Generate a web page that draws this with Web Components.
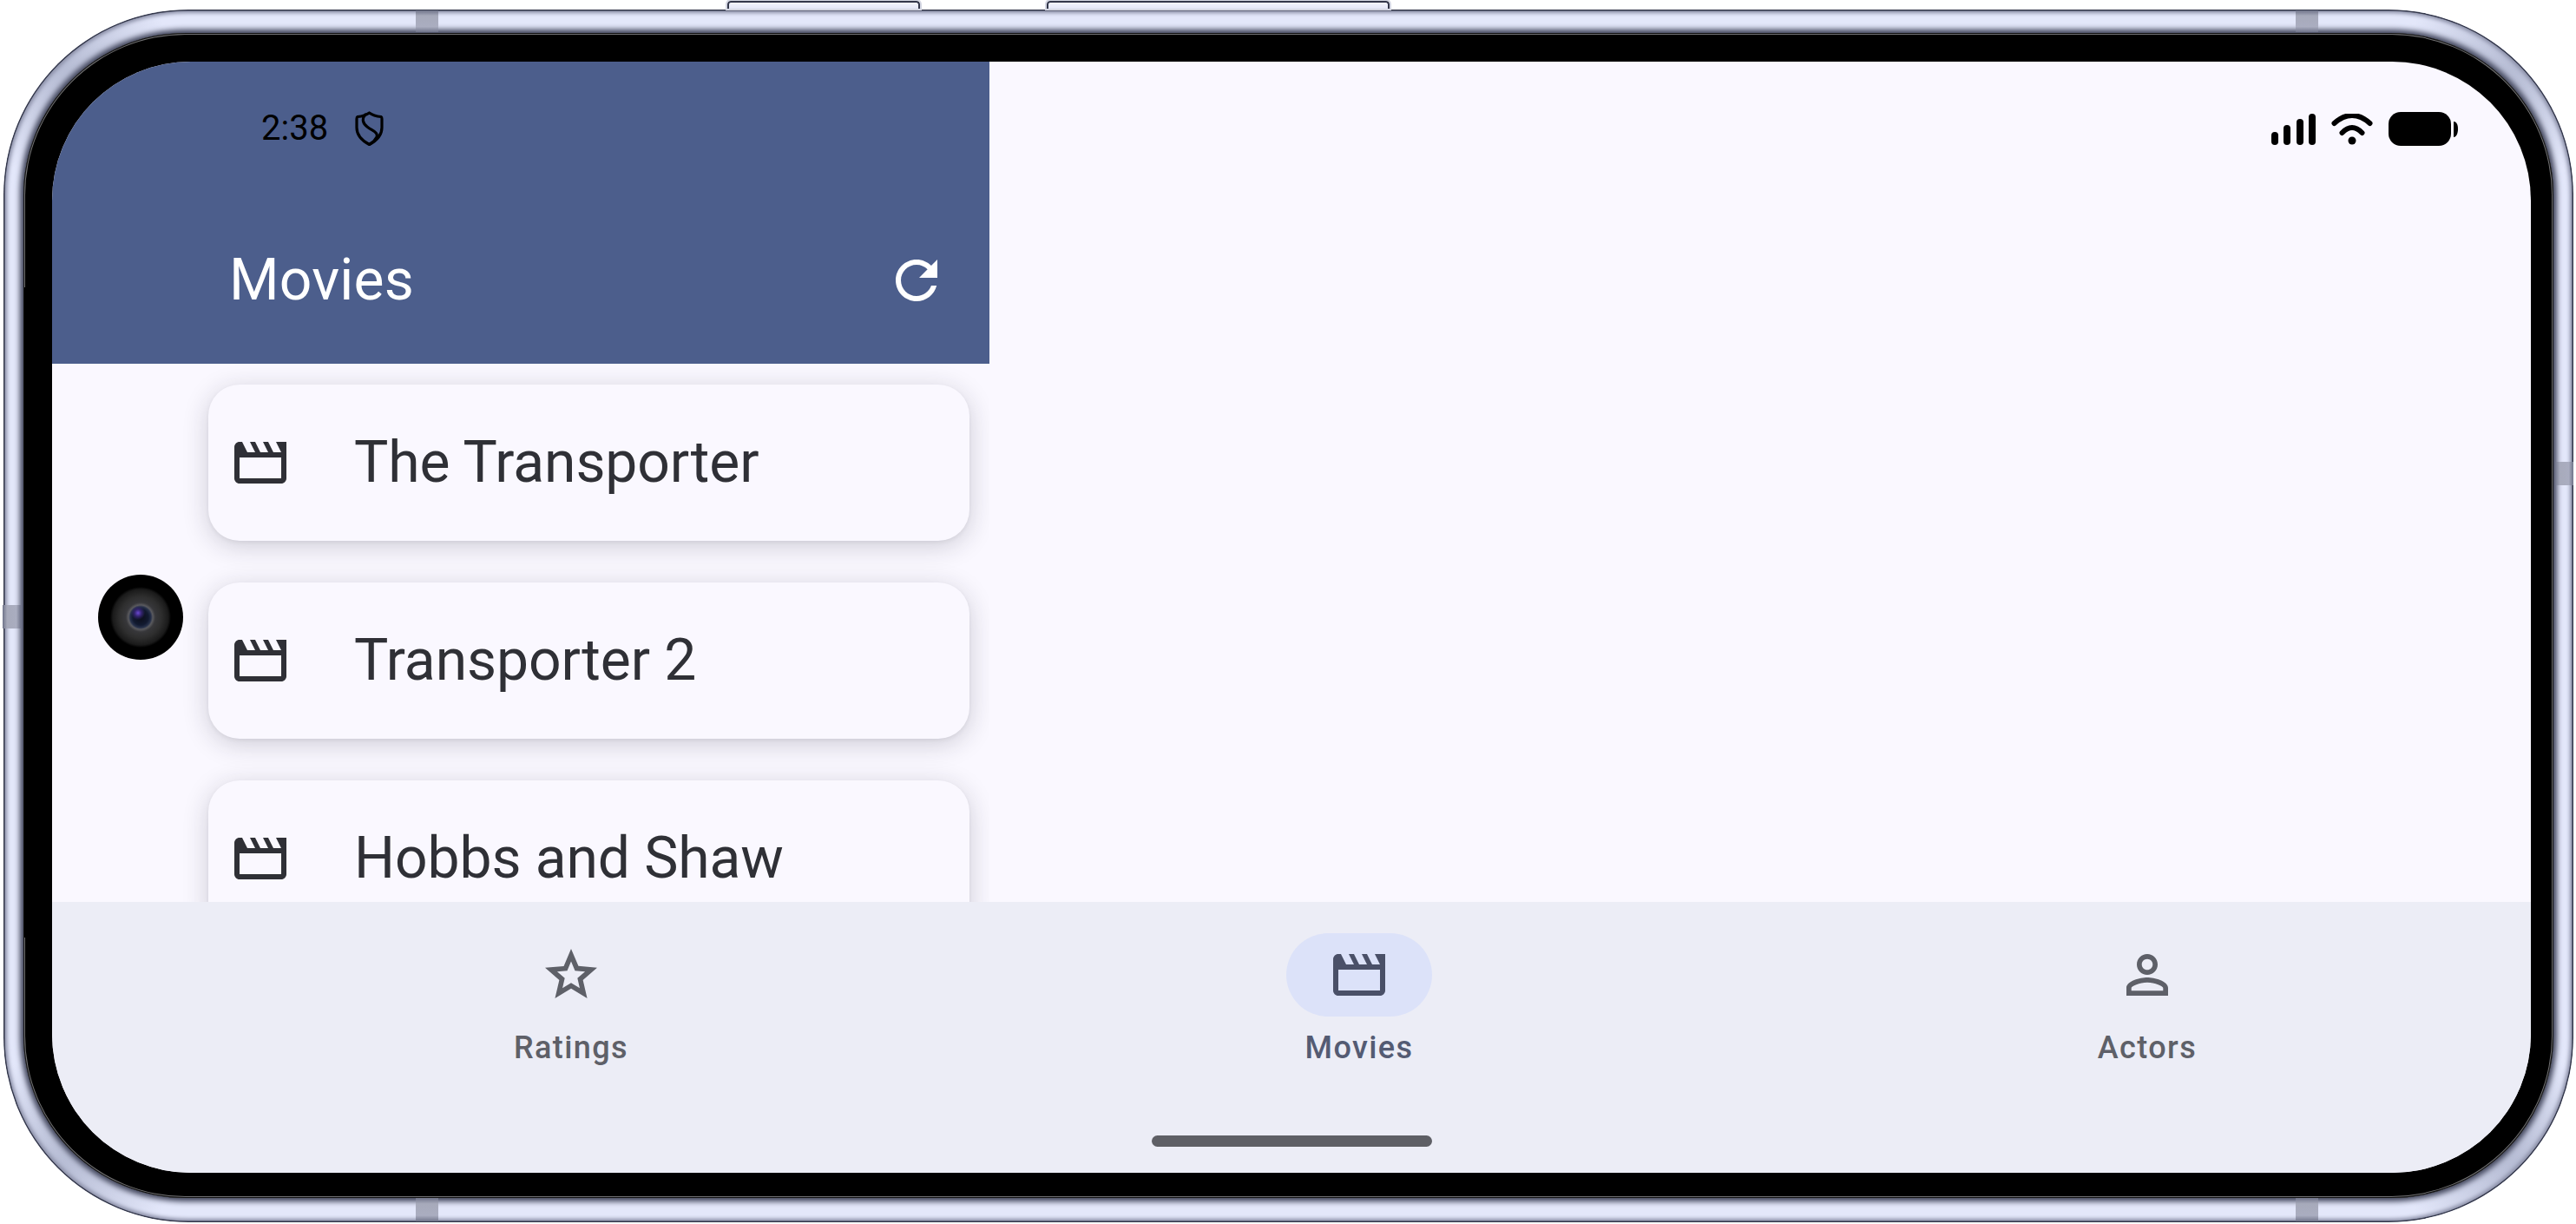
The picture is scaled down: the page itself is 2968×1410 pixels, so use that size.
<!DOCTYPE html>
<html><head><meta charset="utf-8"><title>Movies</title>
<style>
html,body{margin:0;padding:0;background:#fff;width:2968px;height:1410px;overflow:hidden;font-family:Roboto,"Liberation Sans",sans-serif}
</style></head><body>
<phone-frame>
  <movies-app></movies-app>
</phone-frame>
<script>
const MOVIE='M4 10H20v8H4V10M22 4h-4l2 4h-3l-2-4h-2l2 4h-3l-2-4H8l2 4H7L5 4H4c-1.1 0-1.99.9-1.99 2L2 18c0 1.1.9 2 2 2h16c1.1 0 2-.9 2-2V4z';
const ICONS={
 movie:MOVIE,
 star:'M22 9.24l-7.19-.62L12 2 9.19 8.63 2 9.24l5.46 4.73L5.82 21 12 17.27 18.18 21l-1.63-7.03L22 9.24zM12 15.05L8.69 17.05L9.57 13.28L6.65 10.74L10.5 10.39L12 6.86L13.5 10.42L17.36 10.75L14.44 13.29L15.32 17.06L12 15.05z',
 person:'M12 5.9c1.16 0 2.1.94 2.1 2.1s-.94 2.1-2.1 2.1S9.9 9.16 9.9 8s.94-2.1 2.1-2.1m0 9c2.97 0 6.1 1.46 6.1 2.1v1.1H5.9V17c0-.64 3.13-2.1 6.1-2.1M12 4C9.79 4 8 5.79 8 8s1.79 4 4 4 4-1.79 4-4-1.79-4-4-4zm0 9c-2.67 0-8 1.34-8 4v3h16v-3c0-2.66-5.33-4-8-4z',
 refresh:'M17.65 6.35C16.2 4.9 14.21 4 12 4c-4.42 0-7.99 3.58-7.99 8s3.57 8 7.99 8c3.73 0 6.84-2.55 7.73-6h-2.08c-.82 2.33-3.04 4-5.65 4-3.31 0-6-2.69-6-6s2.69-6 6-6c1.66 0 3.14.69 4.22 1.78L13 11h7V4l-2.35 2.35z'
};
class Base extends HTMLElement{
  render(html){ if(!this.shadowRoot) this.attachShadow({mode:'open'}); this.shadowRoot.innerHTML=html; }
}
customElements.define('md-icon',class extends Base{
  connectedCallback(){
    this.render(`<style>:host{display:block;width:72px;height:72px;flex:none;color:inherit}svg{display:block;width:72px;height:72px;fill:currentColor}</style>
    <svg viewBox="0 0 24 24"><path d="${ICONS[this.getAttribute('name')]}"/></svg>`);
  }
});
customElements.define('phone-frame',class extends Base{
  connectedCallback(){
    this.render(`<style>
    :host{display:block;position:relative;width:2968px;height:1410px;box-sizing:border-box;padding:11px 3px 2px 4px}
    .metal{box-sizing:border-box;height:100%;border-radius:213px;padding:27px 23px 28px 23px;
      background:
       radial-gradient(circle 130px at 62px 62px,#b4bad2,transparent) no-repeat,
       radial-gradient(circle 130px at calc(100% - 62px) 62px,#b4bad2,transparent) no-repeat,
       radial-gradient(circle 130px at 62px calc(100% - 62px),#b4bad2,transparent) no-repeat,
       radial-gradient(circle 130px at calc(100% - 62px) calc(100% - 62px),#b4bad2,transparent) no-repeat,
       #e3e7fa;
      box-shadow:inset 0 0 0 1.5px #33374a,inset 0 0 4px 4px #8a8ea6}
    .bezel{box-sizing:border-box;height:100%;border-radius:187px;background:#000;padding:33px 26px 29px 33px;
      box-shadow:0 0 6px 4px #3e4258,inset 0 0 0 1px #111,inset 0 0 0 2px #707072}
    .screen{position:relative;height:100%;border-radius:160px;overflow:hidden;background:#faf8ff}
    .band{position:absolute;background:linear-gradient(#70748a,#a7aabb 25%,#aaadc0 75%,#70748a)}
    .t{width:26px;height:25px;top:12px}.b{width:26px;height:27px;bottom:3px}
    .l{left:479px}.r{left:2645px}
    .side{position:absolute;width:21px;height:27px;background:linear-gradient(90deg,#70748a,#a7aabb 25%,#aaadc0 75%,#70748a)}
    .btn{position:absolute;top:1px;height:9px;box-sizing:border-box;background:linear-gradient(#f3f4fd,#e3e6f6);border:2px solid #33374a;border-bottom:0;border-radius:4px 4px 0 0;outline:2px solid #d4d6e2}
    .notch{position:absolute;left:28px;top:331px;width:3px;height:749px;background:#000}
    .cam{position:absolute;left:113px;top:662px;width:98px;height:98px;border-radius:50%;
      background:
       radial-gradient(circle at 47% 45%,#6a48d0 0,#33246e 4px,transparent 8px),
       radial-gradient(circle at 50% 50%,#0b0d18 0,#121a30 9px,#26304a 12px,#5a5a5e 14px,#37373a 17px,#2e2e2e 24px,#1a1a1a 32px,#000 35px)}
    </style>
    <div class="metal"><div class="bezel"><div class="screen"><slot></slot></div></div></div>
    <i class="btn" style="left:838px;width:222px"></i><i class="btn" style="left:1206px;width:395px"></i>
    <i class="band t l"></i><i class="band t r"></i><i class="band b l"></i><i class="band b r"></i>
    <i class="side" style="left:3px;top:697px"></i><i class="side" style="left:2944px;top:532px"></i>
    <i class="notch"></i>
    <i class="cam"></i>`);
  }
});
customElements.define('movies-app',class extends Base{
  connectedCallback(){
    this.render(`<style>
    :host{display:flex;flex-direction:column;height:100%;background:#faf8ff}
    .main{flex:1;min-height:0;display:flex;overflow:hidden}
    .pane{width:1080px;flex:none;display:flex;flex-direction:column;min-height:0}
    .rest{flex:1;display:flex;justify-content:flex-end;align-items:flex-start;box-sizing:border-box}
    .list{flex:1;min-height:0;overflow:hidden;display:flex;flex-direction:column;gap:48px;padding:24px 23px 0 180px}
    </style>
    <div class="main">
      <div class="pane">
        <app-header title-text="Movies" time="2:38"></app-header>
        <div class="list">
          <movie-card>The Transporter</movie-card>
          <movie-card>Transporter 2</movie-card>
          <movie-card>Hobbs and Shaw</movie-card>
        </div>
      </div>
      <div class="rest"><status-icons></status-icons></div>
    </div>
    <bottom-nav></bottom-nav>`);
  }
});
customElements.define('app-header',class extends Base{
  connectedCallback(){
    this.render(`<style>
    :host{display:block;height:348px;flex:none;box-sizing:border-box;background:#4c5e8c;padding-top:53px}
    .status{display:flex;align-items:center;gap:31px;height:48px;padding-left:241px;color:#000;font:400 40px/48px Roboto,sans-serif}
    svg{display:block;width:33px;height:40px;fill:none;stroke:#000;stroke-width:3.2;stroke-linejoin:round;stroke-linecap:round}
    .bar{display:flex;align-items:center;justify-content:space-between;height:72px;margin-top:115px;padding:0 48px 0 204px;color:#fff}
    h1{margin:0;font:400 66px/72px Roboto,sans-serif;letter-spacing:.2px;color:#fff}
    </style>
    <div class="status"><span>${this.getAttribute('time')}</span>
      <svg viewBox="0 0 33 40"><path d="M16.5 2C20 4.5 25 6 30 6.5C31 7 31 8 31 9V19C31 28 25 34 16.5 38.5C8 34 2 28 2 19V9C2 8 2 7 3 6.5C8 6 13 4.5 16.5 2Z"/><path d="M12 4C7.5 9 9 14 14 18C20 23 27 24 25 30C23 34 20 36.500 17 38"/></svg>
    </div>
    <div class="bar"><h1>${this.getAttribute('title-text')}</h1><md-icon name="refresh"></md-icon></div>`);
  }
});
customElements.define('movie-card',class extends Base{
  connectedCallback(){
    this.render(`<style>
    :host{display:flex;align-items:center;flex:none;height:180px;box-sizing:border-box;padding-left:24px;gap:72px;border-radius:36px;background:#faf8ff;color:#2f3036;
      font:400 66px/88px Roboto,sans-serif;letter-spacing:-.1px;box-shadow:0 6px 30px rgba(30,30,50,.2),0 2px 4px rgba(30,30,50,.06)}
    </style><md-icon name="movie"></md-icon><span><slot></slot></span>`);
  }
});
customElements.define('status-icons',class extends Base{
  connectedCallback(){
    this.render(`<style>
    :host{display:flex;align-items:flex-start;gap:18px;padding:58px 84px 0 0}
    svg{display:block;fill:#000}
    .s{margin-top:2px}
    </style>
    <svg class="s" width="51" height="36" viewBox="0 0 51 36"><rect x="0" y="21" width="8" height="15" rx="4"/><rect x="14" y="13" width="8" height="23" rx="4"/><rect x="29" y="6" width="8" height="30" rx="4"/><rect x="43" y="0" width="8" height="36" rx="4"/></svg>
    <svg class="s" width="48" height="36" viewBox="0 0 48 36"><circle cx="24" cy="31" r="4.500"/><path d="M3.500 11Q24 -7 44.500 11M12.500 22Q24 10 35.500 22" fill="none" stroke="#000" stroke-width="6" stroke-linecap="round"/></svg>
    <svg width="80" height="39" viewBox="0 0 80 39"><rect x="0" y="0" width="72" height="39" rx="14"/><path d="M75 11C78 11 80 14 80 19.500C80 25 78 29 75 29Z"/></svg>`);
  }
});
customElements.define('bottom-nav',class extends Base{
  connectedCallback(){
    this.render(`<style>
    :host{display:flex;flex-direction:column;flex:none;height:312px;box-sizing:border-box;background:#ecedf6;padding-top:36px;overflow:hidden}
    .tabs{display:grid;grid-template-columns:repeat(3,908px);padding-left:144px}
    .ind{width:323px;height:13px;border-radius:7px;background:#5e5f65;align-self:center;margin-top:auto;margin-bottom:30px}
    </style>
    <div class="tabs">
      <nav-tab icon="star" label="Ratings"></nav-tab>
      <nav-tab icon="movie" label="Movies" selected></nav-tab>
      <nav-tab icon="person" label="Actors"></nav-tab>
    </div><div class="ind"></div>`);
  }
});
customElements.define('nav-tab',class extends Base{
  connectedCallback(){
    this.render(`<style>
    :host{display:flex;flex-direction:column;align-items:center;color:#5e6068}
    :host([selected]){color:#4a5068}
    .pill{width:168px;height:96px;border-radius:48px;display:flex;align-items:center;justify-content:center}
    :host([selected]) .pill{background:#dce2f9}
    span{display:block;margin-top:14px;font:500 36px/44px Roboto,sans-serif;letter-spacing:1.4px}
    :host([selected]) span{color:#545b73}
    </style>
    <div class="pill"><md-icon name="${this.getAttribute('icon')}"></md-icon></div>
    <span>${this.getAttribute('label')}</span>`);
  }
});
</script>
</body></html>
